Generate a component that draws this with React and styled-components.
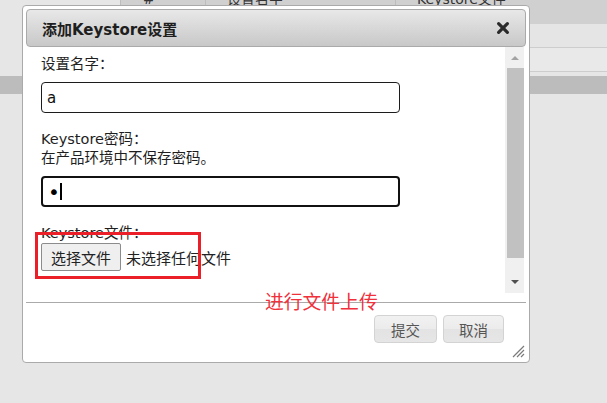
import React from "react";
import styled, { createGlobalStyle } from "styled-components";

const Global = createGlobalStyle`
  html, body { margin: 0; padding: 0; }
  body { background: #e6e6e6; overflow: hidden; }
  * { box-sizing: border-box; }
`;

const FONT = `"DejaVu Sans", "Noto Sans CJK SC", sans-serif`;

const Page = styled.div`
  position: relative;
  width: 607px;
  height: 403px;
  overflow: hidden;
  background: #e6e6e6;
  font-family: ${FONT};
  color: #222;
`;

/* ---------- backdrop (page behind the modal) ---------- */
const Backdrop = styled.div`
  display: flex;
  flex-direction: column;
`;

const Table = styled.div`
  margin-left: 120px;
  display: flex;
  flex-direction: column;
`;

const HeadRow = styled.div`
  display: flex;
  height: 24px;
  background: #d0d0d0;
`;

const HeadCell = styled.div`
  width: ${(p) => p.$w}px;
  padding-left: ${(p) => p.$pad}px;
  border-left: 1px solid #bdbdbd;
  overflow: hidden;
  font-size: 14px;
  line-height: 16px;
  color: #333;
  & > span { display: block; margin-top: -9px; }
`;

const BodyRow = styled.div`
  height: 24px;
  background: ${(p) => p.$bg};
  border-bottom: 1px solid #cdcdcd;
`;

const Band = styled.div`
  margin-top: 4px;
  height: 18px;
  background: #bcbcbc;
`;

/* ---------- dialog ---------- */
const Dialog = styled.div`
  position: absolute;
  left: 22px;
  top: 5px;
  width: 508px;
  height: 358px;
  padding: 3px;
  background: #fff;
  border: 1px solid #aaa;
  border-radius: 4px;
  display: flex;
  flex-direction: column;
`;

const TitleBar = styled.div`
  height: 38px;
  flex: none;
  display: flex;
  align-items: center;
  justify-content: space-between;
  padding: 0 15px 0 15px;
  border: 1px solid #aaa;
  border-radius: 4px;
  background: linear-gradient(#e8e8e8, #c8c8c8);
`;

const Title = styled.span`
  font-size: 15px;
  font-weight: bold;
  color: #1e1e1e;
`;

const CloseButton = styled.button`
  width: 14px;
  height: 14px;
  padding: 0;
  border: 0;
  background: none;
  display: flex;
  cursor: pointer;
`;

const Body = styled.div`
  height: 246px;
  flex: none;
  display: flex;
  padding-right: 2px;
`;

const Content = styled.div`
  flex: 1;
  padding: 8px 0 0 15px;
  display: flex;
  flex-direction: column;
`;

const Group = styled.div`
  display: flex;
  flex-direction: column;
  margin-bottom: 17px;
`;

const Label = styled.div`
  font-size: 14.5px;
  line-height: 19px;
  color: #1e1e1e;
  margin-bottom: ${(p) => (p.$tight ? 0 : 8)}px;
`;

const TextBox = styled.div`
  position: relative;
  width: 359px;
  height: 31px;
  border: ${(p) => (p.$focus ? "2px solid #111" : "1.5px solid #1c1c1c")};
  border-radius: 4px;
  padding-left: 5px;
  display: flex;
  align-items: center;
  font-size: 15px;
  color: #111;
`;

const Dot = styled.span`
  font-size: 20px;
  line-height: 20px;
  color: #000;
`;

const Caret = styled.span`
  display: inline-block;
  width: 2px;
  height: 17px;
  margin-left: 0px;
  background: #000;
`;

const FileRow = styled.div`
  display: flex;
  align-items: center;
`;

const FileButton = styled.button`
  width: 80px;
  height: 28px;
  padding: 0;
  border: 1px solid #8c8c8c;
  border-radius: 2px;
  background: #efefef;
  font-family: ${FONT};
  font-size: 15px;
  color: #222;
`;

const FileName = styled.span`
  margin-left: 5px;
  font-size: 15px;
  color: #222;
`;

const ScrollBar = styled.div`
  width: 19px;
  background: #f0f0f0;
  display: flex;
  flex-direction: column;
`;

const Arrow = styled.div`
  height: ${(p) => p.$h}px;
  display: flex;
  align-items: center;
  justify-content: center;
  padding-left: 1px;
  &::before {
    content: "";
    border-left: 4.5px solid transparent;
    border-right: 4.5px solid transparent;
    ${(p) =>
      p.$down
        ? `border-top: 4px solid #505050;`
        : `border-bottom: 4px solid #a3a3a3;`}
  }
`;

const Thumb = styled.div`
  margin-left: 2px;
  width: 17px;
  height: 190px;
  background: #c1c1c1;
`;

const Spacer = styled.div`
  flex: 1;
`;

const Footer = styled.div`
  margin-top: 9px;
  flex: 1;
  border-top: 1px solid #aaa;
  display: flex;
  justify-content: flex-end;
  align-items: flex-start;
  gap: 6px;
  padding: 12px 22px 0 0;
  position: relative;
`;

const ActionButton = styled.button`
  height: 28px;
  width: ${(p) => p.$w}px;
  padding: 0;
  border: 1px solid #d3d3d3;
  border-radius: 4px;
  background: linear-gradient(#f1f1f1 0%, #ececec 48%, #e3e3e3 52%, #e6e6e6 100%);
  font-family: ${FONT};
  font-size: 14.5px;
  color: #555;
`;

const Grip = styled.div`
  position: absolute;
  right: 1px;
  bottom: 1px;
  width: 14px;
  height: 14px;
  display: flex;
`;

/* ---------- annotations over the screenshot ---------- */
const RedBox = styled.div`
  position: absolute;
  left: 35px;
  top: 232px;
  width: 166px;
  height: 47px;
  border: 3px solid #ea1f27;
`;

const RedNote = styled.div`
  position: absolute;
  left: 265px;
  top: 291px;
  font-family: "Noto Sans CJK SC", sans-serif;
  font-size: 18.8px;
  line-height: 19px;
  color: #f0303a;
`;

export default function App() {
  return (
    <Page>
      <Global />
      <Backdrop>
        <Table>
          <HeadRow>
            <HeadCell $w={85} $pad={22}><span>#</span></HeadCell>
            <HeadCell $w={190} $pad={21}><span>设置名字</span></HeadCell>
            <HeadCell $w={212} $pad={21}><span>Keystore文件</span></HeadCell>
          </HeadRow>
          <BodyRow $bg="#e5e5e5" />
          <BodyRow $bg="#e9e9e9" />
        </Table>
        <Band />
      </Backdrop>

      <Dialog>
        <TitleBar>
          <Title>添加Keystore设置</Title>
          <CloseButton aria-label="close">
            <svg width="14" height="14" viewBox="0 0 14 14">
              <path d="M2.6 2.6 L11.4 11.4 M11.4 2.6 L2.6 11.4" stroke="#2a2a2a" strokeWidth="3.2" strokeLinecap="round" />
            </svg>
          </CloseButton>
        </TitleBar>
        <Body>
          <Content>
            <Group>
              <Label>设置名字：</Label>
              <TextBox>a</TextBox>
            </Group>
            <Group>
              <Label $tight>Keystore密码：</Label>
              <Label>在产品环境中不保存密码。</Label>
              <TextBox $focus>
                <Dot>•</Dot>
                <Caret />
              </TextBox>
            </Group>
            <Group>
              <Label $tight>Keystore文件：</Label>
              <FileRow>
                <FileButton>选择文件</FileButton>
                <FileName>未选择任何文件</FileName>
              </FileRow>
            </Group>
          </Content>
          <ScrollBar>
            <Arrow $h={21} />
            <Thumb />
            <Spacer />
            <Arrow $h={22} $down />
          </ScrollBar>
        </Body>
        <Footer>
          <ActionButton $w={63}>提交</ActionButton>
          <ActionButton $w={61}>取消</ActionButton>
          <Grip>
            <svg width="14" height="14" viewBox="0 0 14 14">
              <path d="M13 2 L2 13 M13 6 L6 13 M13 10 L10 13" stroke="#7a7a7a" strokeWidth="1.2" />
            </svg>
          </Grip>
        </Footer>
      </Dialog>

      <RedBox />
      <RedNote>进行文件上传</RedNote>
    </Page>
  );
}
